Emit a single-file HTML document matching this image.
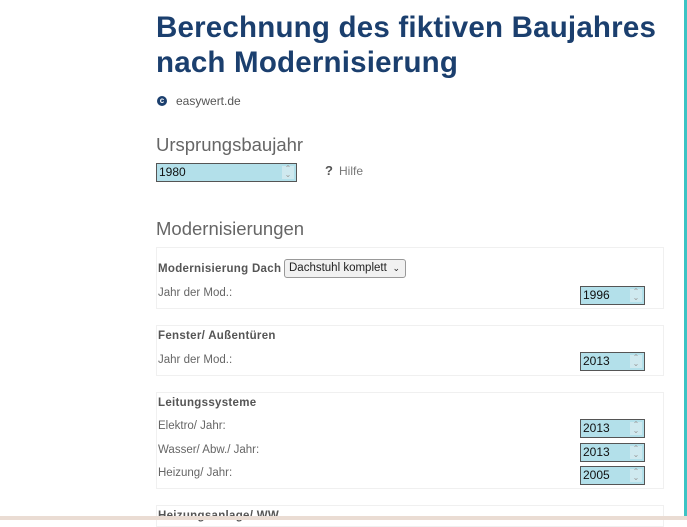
<!DOCTYPE html>
<html><head><meta charset="utf-8"><style>
body{margin:0;width:687px;height:520px;overflow:hidden;background:#fff;font-family:"Liberation Sans",sans-serif;color:#666;position:relative}
.abs{position:absolute}
h1{position:absolute;left:156px;top:10px;margin:0;font-size:29.5px;line-height:35px;color:#1b3f6e;font-weight:bold;letter-spacing:0.2px}
.num{position:absolute;height:17px;background:#b3e0ea;border:1px solid #555;font-size:12px;color:#111;line-height:17px;padding-left:2px;box-sizing:content-box}
.num .sp{position:absolute;right:2px;top:2px;width:12px;height:13px;background:#cfe9ef;color:#999;font-size:8px;line-height:6px;text-align:center}
.box{position:absolute;left:156px;width:506px;border:1px solid #f0f0f0}
.lbl{position:absolute;font-size:11.5px;color:#666}
.b{font-weight:bold;color:#555;font-size:11.5px;position:absolute;letter-spacing:0.3px}
</style></head><body>
<h1>Berechnung des fiktiven Baujahres<br>nach Modernisierung</h1>
<div class="abs" style="left:157px;top:96px;width:10px;height:10px;border-radius:50%;background:#1b3f6e;color:#fff;font-size:8px;line-height:10px;text-align:center;font-weight:bold">c</div>
<div class="abs" style="left:176px;top:94px;font-size:12px;color:#555">easywert.de</div>
<div class="abs" style="left:156px;top:134px;font-size:18.5px;color:#666">Ursprungsbaujahr</div>
<div class="num" style="left:156px;top:163px;width:137px">1980<div class="sp">⌃<br>⌄</div></div>
<div class="abs" style="left:325px;top:163px;font-size:13px;font-weight:bold;color:#555">?</div>
<div class="abs" style="left:339px;top:164px;font-size:12px;color:#777">Hilfe</div>
<div class="abs" style="left:156px;top:218px;font-size:18.5px;color:#666">Modernisierungen</div>

<div class="box" style="top:247px;height:60px"></div>
<div class="b" style="left:158px;top:263px">Modernisierung Dach</div>
<div class="abs" style="left:284px;top:259px;width:122px;height:19px;border:1px solid #999;border-radius:3px;background:#f1f1f1;font-size:11.5px;color:#222;line-height:17px;padding-left:4px;box-sizing:border-box;white-space:nowrap">Dachstuhl komplett<span class="abs" style="right:5px;top:0;font-size:9px">⌄</span></div>
<div class="lbl" style="left:158px;top:287px">Jahr der Mod.:</div>
<div class="num" style="left:580px;top:286px;width:61px">1996<div class="sp">⌃<br>⌄</div></div>

<div class="box" style="top:325px;height:49px"></div>
<div class="b" style="left:158px;top:330px">Fenster/ Außentüren</div>
<div class="lbl" style="left:158px;top:354px">Jahr der Mod.:</div>
<div class="num" style="left:580px;top:352px;width:61px">2013<div class="sp">⌃<br>⌄</div></div>

<div class="box" style="top:392px;height:95px"></div>
<div class="b" style="left:158px;top:397px">Leitungssysteme</div>
<div class="lbl" style="left:158px;top:420px">Elektro/ Jahr:</div>
<div class="num" style="left:580px;top:419px;width:61px">2013<div class="sp">⌃<br>⌄</div></div>
<div class="lbl" style="left:158px;top:444px">Wasser/ Abw./ Jahr:</div>
<div class="num" style="left:580px;top:443px;width:61px">2013<div class="sp">⌃<br>⌄</div></div>
<div class="lbl" style="left:158px;top:467px">Heizung/ Jahr:</div>
<div class="num" style="left:580px;top:466px;width:61px">2005<div class="sp">⌃<br>⌄</div></div>

<div class="box" style="top:505px;height:20px"></div>
<div class="b" style="left:158px;top:510px">Heizungsanlage/ WW</div>
<div class="abs" style="left:684px;top:0;width:3px;height:516px;background:#3cc4c4"></div>
<div class="abs" style="left:0;top:516px;width:687px;height:4px;background:#eadcd3"></div>
</body></html>
